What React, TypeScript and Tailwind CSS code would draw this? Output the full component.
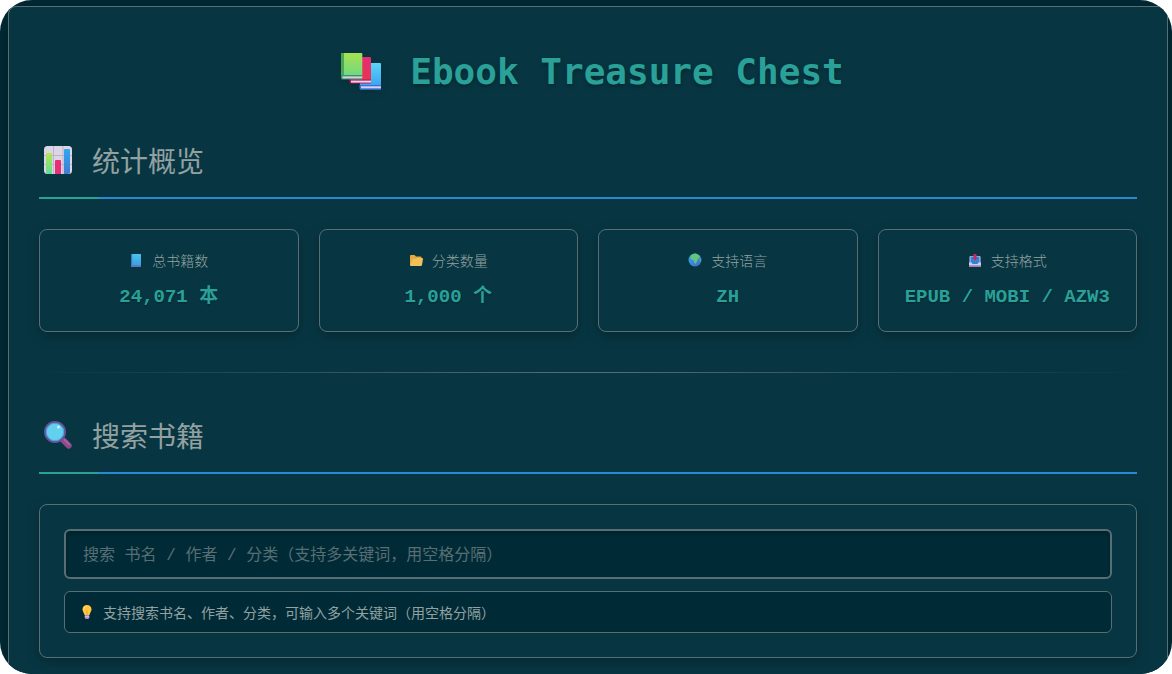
import type { ReactNode } from 'react';

type IconProps = { className?: string };

function BooksIcon({ className }: IconProps) {
  return (
    <svg viewBox="0 0 42 40" className={className} aria-hidden="true">
      <defs>
        <linearGradient id="bk-g" x1="0" y1="0" x2="0" y2="1">
          <stop offset="0" stopColor="#a6e14f" />
          <stop offset="1" stopColor="#6fd884" />
        </linearGradient>
        <linearGradient id="bk-r" x1="0" y1="0" x2="0" y2="1">
          <stop offset="0" stopColor="#e62b74" />
          <stop offset="1" stopColor="#e8354e" />
        </linearGradient>
        <linearGradient id="bk-b" x1="0" y1="0" x2="0" y2="1">
          <stop offset="0" stopColor="#5bd5f8" />
          <stop offset="1" stopColor="#359df0" />
        </linearGradient>
      </defs>
      <path d="M20 11h20q1 0 1 1v25.5H20z" fill="url(#bk-b)" />
      <path d="M19.5 33h21.500v4.500h-20q-1.500 0-1.500-1.500z" fill="#3d71d6" />
      <path d="M21 34.300h20v2H21z" fill="#d9d0f3" />
      <path d="M10 5h20q1 0 1 1v25H10z" fill="url(#bk-r)" />
      <path d="M9.500 27.500H31V31.500H11q-1.500 0-1.500-1.500z" fill="#b8154f" />
      <path d="M11 28.600h20v2H11z" fill="#ead3ee" />
      <path d="M2 1h19.500q.8 0 .8.8V25H1V2q0-1 1-1z" fill="url(#bk-g)" />
      <path d="M2 1h2v23H1V2q0-1 1-1z" fill="#4ba758" />
      <path d="M1 23h21.300v4.500H2.500Q1 27.500 1 26z" fill="#3b9168" />
      <path d="M2.500 24.400h19.800v2H2.500z" fill="#d8d0ea" />
    </svg>
  );
}

function ChartIcon({ className }: IconProps) {
  return (
    <svg viewBox="0 0 28 28" className={className} aria-hidden="true">
      <defs>
        <linearGradient id="ch-g" x1="0" y1="0" x2="0" y2="1">
          <stop offset="0" stopColor="#b3e74f" />
          <stop offset="1" stopColor="#5fdc95" />
        </linearGradient>
        <linearGradient id="ch-b" x1="0" y1="0" x2="0" y2="1">
          <stop offset="0" stopColor="#31a8f0" />
          <stop offset="1" stopColor="#3f7cd2" />
        </linearGradient>
      </defs>
      <rect width="28" height="28" rx="3.500" fill="#dcd5e5" />
      <path d="M0 9.500h28M0 18.500h28M9.500 0v28M19 0v28" stroke="#bdb3c9" strokeWidth="1" />
      <path d="M2 8q0-1 1-1h4q1 0 1 1v20H3.500L2 27.600z" fill="url(#ch-g)" />
      <path d="M11 15q0-1 1-1h4q1 0 1 1v13h-6z" fill="#e92e77" />
      <path d="M20 4q0-1 1-1h4q1 0 1 1v23.300l-1.500.7H20z" fill="url(#ch-b)" />
    </svg>
  );
}

function MagnifierIcon({ className }: IconProps) {
  return (
    <svg viewBox="0 0 28 28" className={className} aria-hidden="true">
      <path d="M17 17l3 3" stroke="#6b5383" strokeWidth="3" />
      <path d="M19.700 19.700l5 5" stroke="#8e4b8c" strokeWidth="6" strokeLinecap="round" />
      <path d="M20.500 18.800l4.600 4.600" stroke="#a75fa2" strokeWidth="2" strokeLinecap="round" />
      <circle cx="11" cy="11" r="10" fill="#63d0ee" stroke="#69539a" strokeWidth="2" />
      <circle cx="11" cy="11" r="8.700" fill="none" stroke="#4ba6dd" strokeWidth="1" />
      <circle cx="14.500" cy="6" r="1.600" fill="#c8f2fb" />
    </svg>
  );
}

function BookIcon({ className }: IconProps) {
  return (
    <svg viewBox="0 0 14 14" className={className} aria-hidden="true">
      <defs>
        <linearGradient id="sb" x1="0" y1="0" x2="0" y2="1">
          <stop offset="0" stopColor="#4dc2ec" />
          <stop offset="1" stopColor="#349be4" />
        </linearGradient>
      </defs>
      <rect x="2" y="1" width="10" height="13" rx=".5" fill="url(#sb)" />
      <path d="M2 1h1.200v12H2z" fill="#2d7fc0" />
      <path d="M2 12.300h10v1.700H2z" fill="#6670bd" />
    </svg>
  );
}

function FolderIcon({ className }: IconProps) {
  return (
    <svg viewBox="0 0 14 14" className={className} aria-hidden="true">
      <path d="M1 3q0-1 1-1h3.500L7 3.500h4.500q1 0 1 1V12H1z" fill="#e2aa40" />
      <path d="M4.500 6H7l1-1h5.200q1 0 .8 1l-1 6q-.2 1-1.200 1H2q-1 0-1-1L3.500 6.800q.3-.8 1-.8z" fill="#f3bf58" />
    </svg>
  );
}

function GlobeIcon({ className }: IconProps) {
  return (
    <svg viewBox="0 0 14 14" className={className} aria-hidden="true">
      <defs>
        <linearGradient id="gl" x1="0" y1="0" x2="1" y2="1">
          <stop offset="0" stopColor="#39a6ee" />
          <stop offset="1" stopColor="#3d6bc9" />
        </linearGradient>
      </defs>
      <circle cx="7" cy="7" r="6.500" fill="url(#gl)" />
      <path d="M3 2.200Q6-.2 9 .9l3 2.400-1.200 2.200-1.200.8-.6 2.300-1.600 2.400-1.200-1.800-.5-2-2.200-.8L2.200 4z" fill="#65c47c" />
      <path d="M12.200 5l.8 2-.7 2-1-1.300z" fill="#55b586" />
    </svg>
  );
}

function InboxIcon({ className }: IconProps) {
  return (
    <svg viewBox="0 0 14 14" className={className} aria-hidden="true">
      <rect x="1.500" y="3" width="11" height="8.500" rx="1" fill="#c9c5e8" />
      <rect x="2.500" y="3.500" width="9" height="7.500" fill="#2e86d3" />
      <path d="M1 9.500h2.500l1 1.500h5l1-1.500H13V13q0 1-1 1H2q-1 0-1-1z" fill="#d8c9ed" />
      <path d="M1 12.300h12v.7q0 1-1 1H2q-1 0-1-1z" fill="#9d82bd" />
      <path d="M5.500 1h3v3.500h1.200L7 7.500 4.300 4.500h1.200z" fill="#c92961" />
    </svg>
  );
}

function BulbIcon({ className }: IconProps) {
  return (
    <svg viewBox="0 0 14 14" className={className} aria-hidden="true">
      <path d="M7 0C4.300 0 2.500 1.900 2.500 4.300c0 2.200 1.400 2.900 2 5.700h5c.6-2.800 2-3.500 2-5.700C11.500 1.900 9.700 0 7 0z" fill="#ffc740" />
      <path d="M6.500 1.200C4.800 1.500 3.800 2.800 3.900 4.500" stroke="#ffe58a" strokeWidth="1" fill="none" />
      <path d="M6.200 5.500h1.600L7.500 10h-1z" fill="#f6a33a" />
      <path d="M4.800 10h4.400v2.500q0 1.500-1.500 1.500H6.300q-1.500 0-1.500-1.500z" fill="#a88ac0" />
      <path d="M4.800 11.300h4.400v1H4.800z" fill="#d9cce8" />
    </svg>
  );
}

function SectionTitle({ icon, children }: { icon: ReactNode; children: ReactNode }) {
  return (
    <h2 className="relative flex items-center gap-5 border-b-2 border-[#268bd2] pb-[17px] pl-[5px] font-['Noto_Sans_CJK_SC',sans-serif] text-[28px] leading-10 font-normal text-[#93a1a1] after:absolute after:-bottom-[2px] after:left-0 after:h-[2px] after:w-[60px] after:bg-[#2aa198]">
      {icon}
      <span>{children}</span>
    </h2>
  );
}

const stats = [
  { label: '总书籍数', value: '24,071 本', Icon: BookIcon },
  { label: '分类数量', value: '1,000 个', Icon: FolderIcon },
  { label: '支持语言', value: 'ZH', Icon: GlobeIcon },
  { label: '支持格式', value: 'EPUB / MOBI / AZW3', Icon: InboxIcon },
];

export default function App() {
  return (
    <div className="flex min-h-screen flex-col overflow-hidden rounded-[32px] bg-[#002b36] pt-[6px] pr-1 pl-2 font-['Liberation_Mono','Noto_Sans_CJK_SC',monospace] text-[#93a1a1]">
      <main className="flex-1 rounded-t-lg border border-b-0 border-[#586e75] bg-[#073642] px-[30px] pt-[41px] pb-4 shadow-[0_4px_20px_rgba(0,0,0,0.3)]">
        <h1 className="mb-11 flex items-center justify-center gap-7 pl-2 font-['DejaVu_Sans_Mono',monospace] text-4xl leading-[48px] font-bold text-[#2aa198] [text-shadow:0_2px_4px_rgba(0,0,0,0.3)]">
          <BooksIcon className="h-10 w-[42px] shrink-0 drop-shadow-md" />
          <span>Ebook Treasure Chest</span>
        </h1>

        <section>
          <SectionTitle icon={<ChartIcon className="size-7" />}>统计概览</SectionTitle>
          <dl className="mt-[30px] grid grid-cols-4 gap-5">
            {stats.map(({ label, value, Icon }) => (
              <div
                key={label}
                className="rounded-lg border border-[#586e75] px-4 py-5 text-center shadow-[0_4px_12px_rgba(0,0,0,0.25)]"
              >
                <dt className="flex items-center justify-center gap-[9px] font-['Noto_Sans_CJK_SC',sans-serif] text-sm font-light">
                  <Icon className="size-[14px]" />
                  {label}
                </dt>
                <dd className="mt-[13px] text-[19px] leading-7 font-bold whitespace-nowrap text-[#2aa198] [text-shadow:0_1px_2px_rgba(0,0,0,0.3)]">
                  {value}
                </dd>
              </div>
            ))}
          </dl>
        </section>

        <hr className="mt-10 mb-[42px] h-px border-0 bg-linear-to-r from-transparent via-[#586e75] to-transparent" />

        <section>
          <SectionTitle icon={<MagnifierIcon className="size-7" />}>搜索书籍</SectionTitle>
          <div className="mt-[30px] rounded-lg border border-[#586e75] p-6 shadow-[0_4px_12px_rgba(0,0,0,0.25)]">
            <input
              type="search"
              aria-label="搜索书籍"
              placeholder="搜索 书名 / 作者 / 分类（支持多关键词，用空格分隔）"
              className="block h-[50px] w-full rounded-md border-2 border-[#586e75] bg-[#002b36] px-[17px] pt-[3px] text-base text-[#93a1a1] shadow-[inset_0_2px_4px_rgba(0,0,0,0.25)] outline-none placeholder:text-[#586e75]"
            />
            <p className="mt-3 flex items-center gap-[9px] rounded-md border border-[#586e75] bg-[#002b36] px-[15px] py-[10px] font-['Noto_Sans_CJK_SC',sans-serif] text-sm">
              <BulbIcon className="size-[14px] shrink-0" />
              <span>支持搜索书名、作者、分类，可输入多个关键词（用空格分隔）</span>
            </p>
          </div>
        </section>
      </main>
    </div>
  );
}
